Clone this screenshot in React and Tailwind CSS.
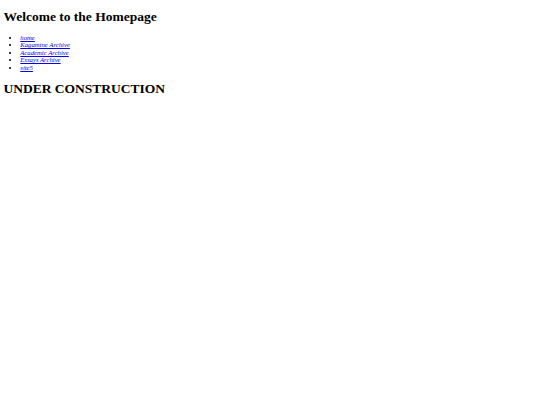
// Homepage placeholder — plain browser-default look, scaled down
const LINKS = ['home', 'Kagamine Archive', 'Academic Archive', 'Essays Archive', 'site5']

export default function App() {
  return (
    <div className="min-h-screen bg-white px-[3.4px] pt-px text-black font-['Liberation_Serif','Times_New_Roman',serif]">
      <h1 className="mt-[8px] mb-[9px] text-[13.5px] font-bold leading-[15.5px]">Welcome to the Homepage</h1>
      <ul className="mt-[6.2px] mb-[6.7px] pl-[16.9px] list-disc text-[6.7px] leading-[7.6px]">
        {LINKS.map((l) => (
          <li key={l}>
            <a href="#" className="italic underline text-[#0000ee]">{l}</a>
          </li>
        ))}
      </ul>
      <h1 className="mt-[10px] mb-[9px] text-[13.5px] font-bold leading-[15.5px]">UNDER CONSTRUCTION</h1>
    </div>
  )
}
